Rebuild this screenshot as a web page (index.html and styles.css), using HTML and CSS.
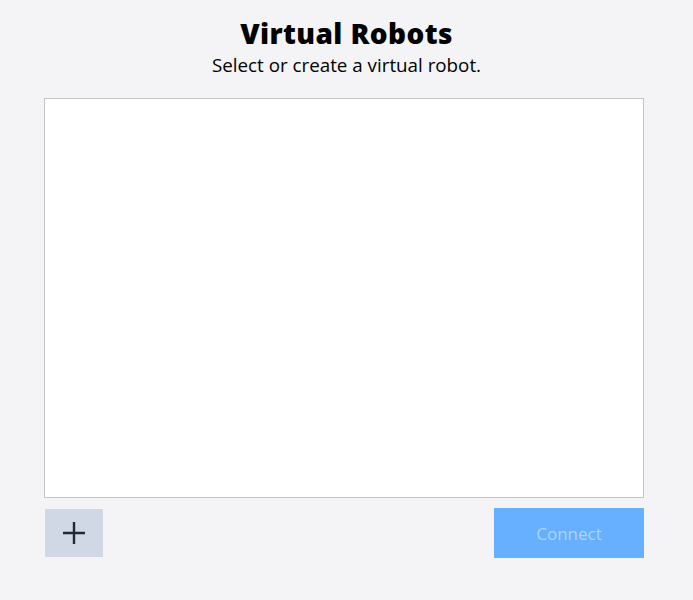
FILE: index.html
```html
<!DOCTYPE html>
<html>
<head>
<meta charset="utf-8">
<link rel="stylesheet" href="styles.css">
</head>
<body>
<div class="page">
  <header class="head">
    <h1 class="title">Virtual Robots</h1>
    <p class="subtitle">Select or create a virtual robot.</p>
  </header>
  <div class="panel">
    <div class="list"></div>
    <div class="actions">
      <button class="add" aria-label="Add">
        <svg width="24" height="24" viewBox="0 0 24 24"><path d="M12 1v22M1 12h22" stroke="#1f2937" stroke-width="2.4" fill="none"/></svg>
      </button>
      <button class="connect" disabled>Connect</button>
    </div>
  </div>
</div>
</body>
</html>
```
FILE: styles.css
```css
html, body { margin: 0; padding: 0; background: #f4f4f6; }
body { font-family: "Open Sans", "Noto Sans", sans-serif; color: #000; }
.page { width: 693px; height: 600px; box-sizing: border-box; padding-top: 14px; }
.head { display: flex; flex-direction: column; align-items: center; }
.title { margin: 0; font-size: 28px; font-weight: 800; line-height: 38px; letter-spacing: 0.4px; }
.subtitle { margin: 0; font-size: 18.8px; line-height: 26px; }
.panel { margin: 20px 0 0 44px; width: 600px; }
.list { box-sizing: border-box; width: 600px; height: 400px; background: #fff; border: 1px solid #c4c4c4; }
.actions { display: flex; justify-content: space-between; align-items: flex-start; margin-top: 10px; }
.add { margin: 1px 0 0 1px; width: 58px; height: 48px; border: none; background: #cfd8e4; display: flex; align-items: center; justify-content: center; padding: 0; }
.connect { width: 150px; height: 50px; border: none; background: #66b0ff; color: #aed4ff; font-family: inherit; font-size: 17px; padding: 0; }
```
